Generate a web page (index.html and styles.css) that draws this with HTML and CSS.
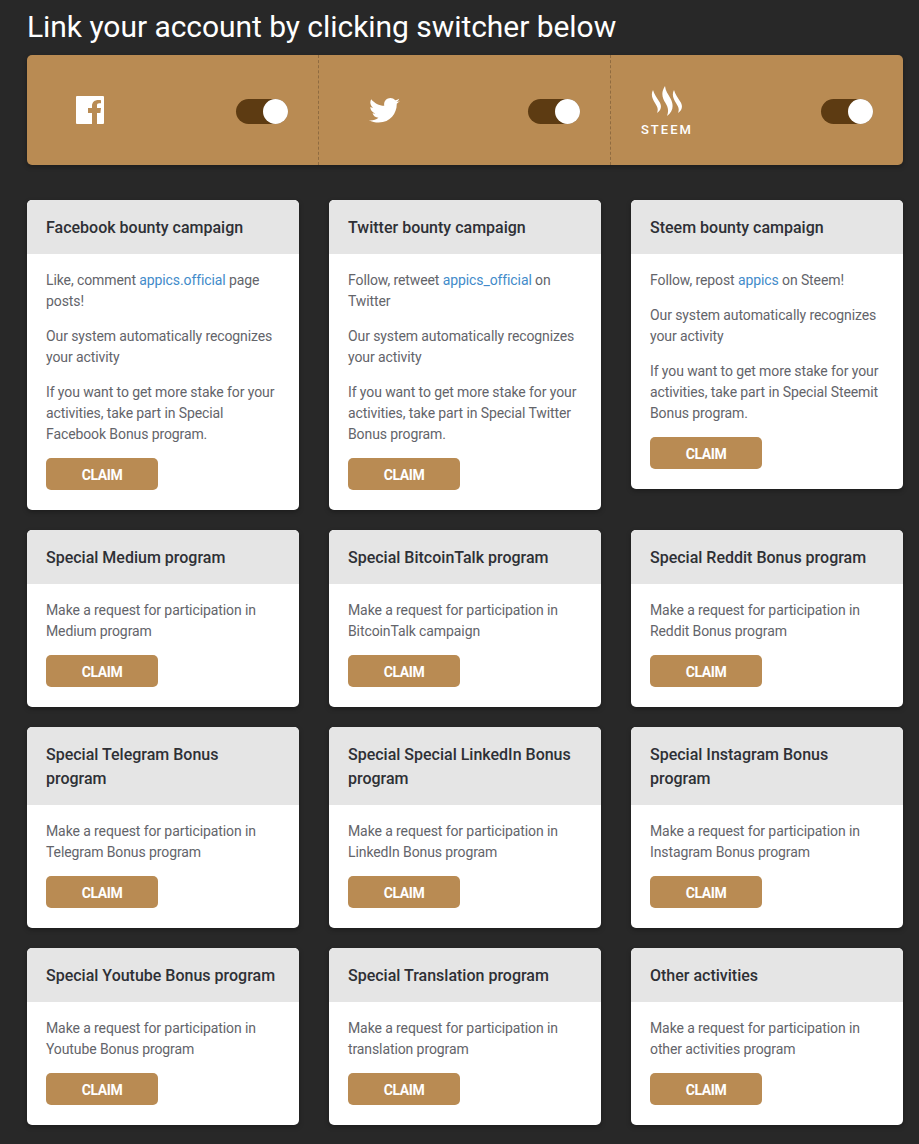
FILE: index.html

```html
<!DOCTYPE html>
<html lang="en">
<head>
    <meta charset="UTF-8">
    <meta name="viewport" content="width=device-width, initial-scale=1.0">
    <title>Bounty campaigns</title>
    <link rel="stylesheet" href="styles.css">
</head>
<body>
    <h1>Link your account by clicking switcher below</h1>

    <div class="switcher-bar">
        <div class="switcher-item">
            <svg width="28" height="28" viewBox="0 0 28 28"><path fill="#fff" d="M1 0h26a1 1 0 0 1 1 1v26a1 1 0 0 1-1 1H21V17h3.400l.6-5H21V9.500c0-1.500.5-2.200 2.300-2.200H25V4.200C24.500 4.100 23.600 4 22.400 4 18.800 4 16 6 16 10v2h-4v5h4v11H1a1 1 0 0 1-1-1V1a1 1 0 0 1 1-1z"/></svg>
            <span class="toggle"><span class="knob"></span></span>
        </div>
        <div class="switcher-item">
            <svg class="icon-tw" width="31" height="25" viewBox="0 0 24 19.400"><path fill="#fff" d="M24 2.400c-.9.400-1.800.7-2.800.8 1-.6 1.800-1.600 2.200-2.700-1 .6-2 1-3.100 1.200C19.300.7 18 0 16.600 0c-2.700 0-4.900 2.200-4.900 4.900 0 .4 0 .8.100 1.100C7.700 5.800 4.100 3.900 1.700.9c-.4.700-.7 1.600-.7 2.500 0 1.700.9 3.200 2.200 4.100-.8 0-1.600-.2-2.200-.6v.1c0 2.400 1.700 4.400 3.900 4.800-.4.100-.8.200-1.300.2-.3 0-.6 0-.9-.1.600 2 2.400 3.400 4.600 3.400-1.700 1.300-3.800 2.100-6.100 2.100-.4 0-.8 0-1.200-.1C2.200 18.300 4.800 19.100 7.500 19.100c9.100 0 14-7.500 14-14v-.6c1-.7 1.800-1.500 2.500-2.100z"/></svg>
            <span class="toggle"><span class="knob"></span></span>
        </div>
        <div class="switcher-item">
            <div class="steem-logo">
                <svg width="32" height="33" viewBox="0 0 32 33"><path fill="#fff" d="M2 5C3 9 6 13 8.500 17 10.500 20 11 25 6 28 7.500 24 6.500 22 4 18 1.500 14-.5 10 2 5zM14 1C14.500 6 17 9 19.500 13.500 22.500 19 23 26 16 31 18 26 17 22 14.500 18 11.500 13 9.500 8 14 1zM23 5C24 9 27 13 29.500 17 31.500 20 32 25 27 28 28.500 24 27.500 22 25 18 22.500 14 20.500 10 23 5z"/></svg>
                <span class="steem-label">STEEM</span>
            </div>
            <span class="toggle"><span class="knob"></span></span>
        </div>
    </div>

    <div class="card-grid">
        <div class="card">
            <div class="card-head">Facebook bounty campaign</div>
            <div class="card-body">
                <p>Like, comment <a href="#">appics.official</a> page posts!</p>
                <p>Our system automatically recognizes your activity</p>
                <p>If you want to get more stake for your activities, take part in Special Facebook Bonus program.</p>
                <button type="button">CLAIM</button>
            </div>
        </div>
        <div class="card">
            <div class="card-head">Twitter bounty campaign</div>
            <div class="card-body">
                <p>Follow, retweet <a href="#">appics_official</a> on Twitter</p>
                <p>Our system automatically recognizes your activity</p>
                <p>If you want to get more stake for your activities, take part in Special Twitter Bonus program.</p>
                <button type="button">CLAIM</button>
            </div>
        </div>
        <div class="card">
            <div class="card-head">Steem bounty campaign</div>
            <div class="card-body">
                <p>Follow, repost <a href="#">appics</a> on Steem!</p>
                <p>Our system automatically recognizes your activity</p>
                <p>If you want to get more stake for your activities, take part in Special Steemit Bonus program.</p>
                <button type="button">CLAIM</button>
            </div>
        </div>

        <div class="card">
            <div class="card-head">Special Medium program</div>
            <div class="card-body">
                <p>Make a request for participation in Medium program</p>
                <button type="button">CLAIM</button>
            </div>
        </div>
        <div class="card">
            <div class="card-head">Special BitcoinTalk program</div>
            <div class="card-body">
                <p>Make a request for participation in BitcoinTalk campaign</p>
                <button type="button">CLAIM</button>
            </div>
        </div>
        <div class="card">
            <div class="card-head">Special Reddit Bonus program</div>
            <div class="card-body">
                <p>Make a request for participation in Reddit Bonus program</p>
                <button type="button">CLAIM</button>
            </div>
        </div>

        <div class="card">
            <div class="card-head">Special Telegram Bonus program</div>
            <div class="card-body">
                <p>Make a request for participation in Telegram Bonus program</p>
                <button type="button">CLAIM</button>
            </div>
        </div>
        <div class="card">
            <div class="card-head">Special Special LinkedIn Bonus program</div>
            <div class="card-body">
                <p>Make a request for participation in LinkedIn Bonus program</p>
                <button type="button">CLAIM</button>
            </div>
        </div>
        <div class="card">
            <div class="card-head">Special Instagram Bonus program</div>
            <div class="card-body">
                <p>Make a request for participation in Instagram Bonus program</p>
                <button type="button">CLAIM</button>
            </div>
        </div>

        <div class="card">
            <div class="card-head">Special Youtube Bonus program</div>
            <div class="card-body">
                <p>Make a request for participation in Youtube Bonus program</p>
                <button type="button">CLAIM</button>
            </div>
        </div>
        <div class="card">
            <div class="card-head">Special Translation program</div>
            <div class="card-body">
                <p>Make a request for participation in translation program</p>
                <button type="button">CLAIM</button>
            </div>
        </div>
        <div class="card">
            <div class="card-head">Other activities</div>
            <div class="card-body">
                <p>Make a request for participation in other activities program</p>
                <button type="button">CLAIM</button>
            </div>
        </div>
    </div>
</body>
</html>
```

FILE: styles.css

```css
body {
    font-family: Roboto, "Liberation Sans", sans-serif;
    margin: 0;
    padding: 0 16px 19px 27px;
    background-color: #282828;
}
h1 {
    margin: 0;
    padding-top: 10px;
    height: 55px;
    box-sizing: border-box;
    font-size: 30px;
    line-height: 34px;
    font-weight: 400;
    letter-spacing: -0.05px;
    color: #fff;
}
.switcher-bar {
    display: grid;
    grid-template-columns: 291px 292px 1fr;
    height: 110px;
    background-color: #b98b53;
    border-radius: 5px;
    box-shadow: 0 2px 5px rgba(0,0,0,0.3);
}
.switcher-item {
    display: flex;
    align-items: center;
    justify-content: space-between;
    padding: 0 30px 0 49px;
    border-left: 1px dashed #8f6b40;
}
.switcher-item:first-child {
    border-left: none;
}
.icon-tw {
    margin-left: 1px;
}
.toggle {
    display: block;
    width: 52px;
    height: 25px;
    margin-top: 3px;
    border-radius: 13px;
    background-color: #5d3b12;
    position: relative;
}
.knob {
    position: absolute;
    top: 0;
    right: 0;
    width: 25px;
    height: 25px;
    border-radius: 50%;
    background-color: #fff;
}
.steem-logo {
    display: flex;
    flex-direction: column;
    align-items: center;
    margin-left: -19px;
}
.steem-label {
    font-size: 13px;
    line-height: 13px;
    font-weight: 500;
    letter-spacing: 2px;
    color: #fff;
    margin-top: 5px;
}
.card-grid {
    display: grid;
    grid-template-columns: 272px 272px 272px;
    column-gap: 30px;
    row-gap: 20px;
    align-items: start;
    margin-top: 35px;
}
.card {
    background-color: #fff;
    border-radius: 5px;
    box-shadow: 0 2px 5px rgba(0,0,0,0.3);
    overflow: hidden;
}
.card-head {
    background-color: #e5e5e5;
    padding: 16px 19px 14px;
    font-size: 16px;
    line-height: 24px;
    font-weight: 500;
    color: #2e3035;
}
.card-body {
    padding: 16px 19px 20px;
}
.card-body p {
    margin: 0 0 14px;
    font-size: 14px;
    line-height: 21px;
    letter-spacing: -0.1px;
    color: #63646a;
}
.card-body p:last-of-type {
    margin-bottom: 13px;
}
.card-body a {
    color: #428bca;
    text-decoration: none;
}
button {
    display: block;
    width: 112px;
    height: 32px;
    padding: 1px 0 0;
    border: none;
    border-radius: 5px;
    background-color: #b98b53;
    color: #fff;
    font-family: inherit;
    font-size: 14px;
    font-weight: 700;
    letter-spacing: -0.4px;
    cursor: pointer;
}
```
